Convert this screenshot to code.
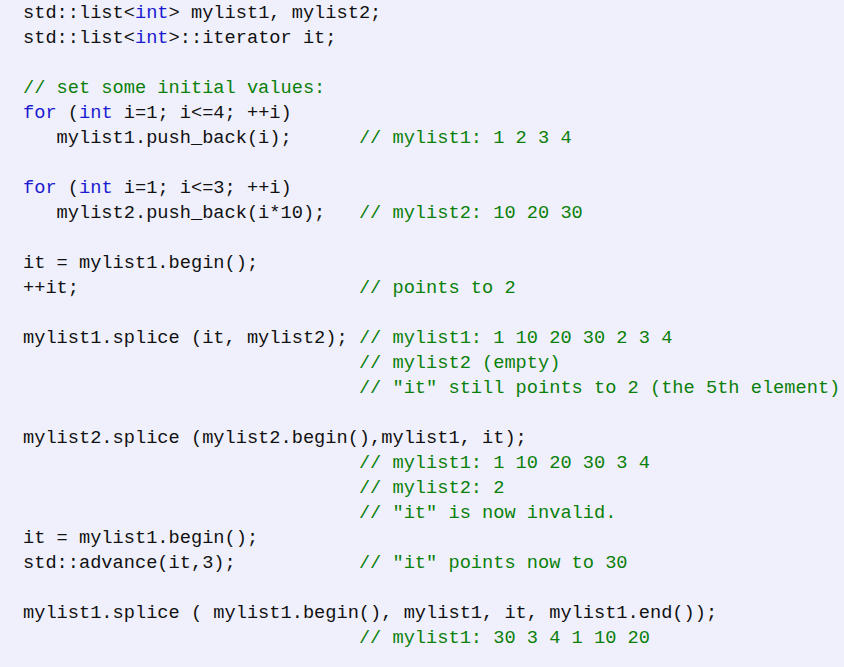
import React from 'react'

// each line is a list of [kind, text] pieces: k = keyword, c = comment, t = plain
const lines = [
  [['t', 'std::list<'], ['k', 'int'], ['t', '> mylist1, mylist2;']],
  [['t', 'std::list<'], ['k', 'int'], ['t', '>::iterator it;']],
  [],
  [['c', '// set some initial values:']],
  [['k', 'for'], ['t', ' ('], ['k', 'int'], ['t', ' i=1; i<=4; ++i)']],
  [['t', '   mylist1.push_back(i);      '], ['c', '// mylist1: 1 2 3 4']],
  [],
  [['k', 'for'], ['t', ' ('], ['k', 'int'], ['t', ' i=1; i<=3; ++i)']],
  [['t', '   mylist2.push_back(i*10);   '], ['c', '// mylist2: 10 20 30']],
  [],
  [['t', 'it = mylist1.begin();']],
  [['t', '++it;                         '], ['c', '// points to 2']],
  [],
  [['t', 'mylist1.splice (it, mylist2); '], ['c', '// mylist1: 1 10 20 30 2 3 4']],
  [['t', '                              '], ['c', '// mylist2 (empty)']],
  [['t', '                              '], ['c', '// "it" still points to 2 (the 5th element)']],
  [],
  [['t', 'mylist2.splice (mylist2.begin(),mylist1, it);']],
  [['t', '                              '], ['c', '// mylist1: 1 10 20 30 3 4']],
  [['t', '                              '], ['c', '// mylist2: 2']],
  [['t', '                              '], ['c', '// "it" is now invalid.']],
  [['t', 'it = mylist1.begin();']],
  [['t', 'std::advance(it,3);           '], ['c', '// "it" points now to 30']],
  [],
  [['t', 'mylist1.splice ( mylist1.begin(), mylist1, it, mylist1.end());']],
  [['t', '                              '], ['c', '// mylist1: 30 3 4 1 10 20']],
]

const colors = {
  k: 'text-[#1a1ad0]',
  c: 'text-[#0a800a]',
  t: 'text-[#111111]',
}

export default function App() {
  return (
    <div className="w-[844px] h-[667px] overflow-hidden bg-[#f0f0fc]">
      <pre className="pl-[23px] pt-px text-[18.67px] leading-[25px] whitespace-pre font-['Liberation_Mono',monospace]">
        {lines.map((line, i) => (
          <div key={i} className="h-[25px]">
            {line.map(([kind, text], j) => (
              <span key={j} className={colors[kind]}>{text}</span>
            ))}
          </div>
        ))}
      </pre>
    </div>
  )
}
